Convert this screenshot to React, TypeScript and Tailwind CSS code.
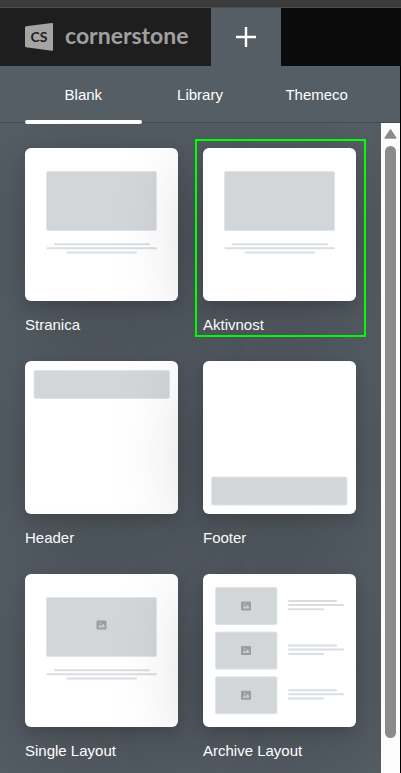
import { useState } from "react";
import type { ReactNode } from "react";

const tabs = ["Blank", "Library", "Themeco"];

function PictureIcon({ x, y }: { x: number; y: number }) {
  return (
    <g transform={`translate(${x} ${y})`}>
      <rect width="10" height="9" rx="1.2" fill="#989ea2" />
      <path d="M2 7V5.6L3.5 4.3L4.6 5.4L6.6 3.2L8.2 5.2V7Z" fill="#c6cacd" />
      <circle cx="3.8" cy="2.6" r="0.8" fill="#c6cacd" />
    </g>
  );
}

function Block({ x, y, width, height }: { x: number; y: number; width: number; height: number }) {
  return (
    <rect x={x} y={y} width={width} height={height} rx="1.5" fill="#d2d6d9" stroke="#dfe5ea" />
  );
}

function Line({ x, y, width }: { x: number; y: number; width: number }) {
  return <rect x={x} y={y} width={width} height="2" rx="1" fill="#d9dee3" />;
}

function PageArt() {
  return (
    <>
      <Block x={21.5} y={23.5} width={110} height={59} />
      <Line x={29} y={95.3} width={96} />
      <Line x={21.5} y={99.3} width={110.5} />
      <Line x={41.5} y={103.4} width={70.5} />
    </>
  );
}

function ArchiveArt() {
  return (
    <>
      {[0, 44.6, 89.3].map((top) => (
        <g key={top}>
          <Block x={12.5} y={top + 13.5} width={61.5} height={37} />
          <PictureIcon x={38} y={top + 27.5} />
          <Line x={85} y={top + 26} width={49} />
          <Line x={85} y={top + 30} width={56} />
          <Line x={85} y={top + 34.3} width={36} />
        </g>
      ))}
    </>
  );
}

const templates: { name: string; art: ReactNode; highlighted?: boolean }[] = [
  { name: "Stranica", art: <PageArt /> },
  { name: "Aktivnost", art: <PageArt />, highlighted: true },
  { name: "Header", art: <Block x={9} y={9.5} width={135.5} height={28} /> },
  { name: "Footer", art: <Block x={8.5} y={116} width={135.5} height={28} /> },
  {
    name: "Single Layout",
    art: (
      <>
        <PageArt />
        <PictureIcon x={71.5} y={46.5} />
      </>
    ),
  },
  { name: "Archive Layout", art: <ArchiveArt /> },
];

function Logo() {
  return (
    <div className="flex min-w-0 flex-1 items-center gap-3 bg-[#1e1e1e] pl-[25px]">
      <svg viewBox="0 0 28 28" className="size-7 shrink-0" aria-hidden="true">
        <path
          d="M1.2 3.3L26.7 0.1Q28 0 28 1.3V26.5Q28 27.9 26.7 27.7L1.1 24.3Q0 24.1 0 23V4.5Q0 3.5 1.2 3.3Z"
          fill="#a5a5a5"
        />
        <text x="14" y="18.8" textAnchor="middle" fontFamily="Lato, sans-serif" fontSize="14" fontWeight="700" fill="#1e1e1e">
          CS
        </text>
      </svg>
      <span className="pb-1 font-[Lato,sans-serif] text-[23px] font-bold leading-7 text-[#a0a0a0]">cornerstone</span>
    </div>
  );
}

export default function App() {
  const [activeTab, setActiveTab] = useState("Blank");

  return (
    <div className="flex min-h-screen flex-col border-r border-black bg-[#555d65] font-['Liberation_Sans',Arial,sans-serif] text-[15px] text-white">
      <div className="-mr-px h-2 border-b border-[#4a4a4a] bg-[#3c3c3c]" />
      <header className="-mr-px flex h-[58px] bg-[#0b0b0b]">
        <Logo />
        <button type="button" aria-label="New document" className="flex w-[70px] shrink-0 items-center justify-center bg-[#555d65]">
          <svg viewBox="0 0 20 20" className="size-5" aria-hidden="true">
            <path d="M10 0V20M0 10H20" stroke="#fff" strokeWidth="2.4" />
          </svg>
        </button>
        <div className="w-[120px] shrink-0" />
      </header>

      <nav className="grid h-[57px] grid-cols-3 border-b border-[#434a51] px-[25px]">
        {tabs.map((tab) => (
          <button key={tab} type="button" onClick={() => setActiveTab(tab)} className="relative pt-0.5">
            {tab}
            {activeTab === tab && <span className="absolute inset-x-0 -bottom-0.5 h-1 rounded-xs bg-white" />}
          </button>
        ))}
      </nav>

      <div className="flex flex-1">
        <main className="grid flex-1 grid-cols-2 content-start gap-x-[25px] gap-y-6 overflow-hidden px-[25px] pt-[25px] pb-2">
          {templates.map(({ name, art, highlighted }) => (
            <button key={name} type="button" className="relative flex flex-col text-left">
              <span className="block w-full rounded-md bg-white shadow-[0_6px_14px_rgba(0,0,0,0.14),0_18px_88px_rgba(0,0,0,0.22)]">
                <svg viewBox="0 0 153 153" className="block w-full" aria-hidden="true">
                  {art}
                </svg>
              </span>
              <span className="relative mt-3 leading-6">{name}</span>
              {highlighted && (
                <span className="absolute -top-[9px] -right-2.5 bottom-0 -left-2 border-2 border-[#00ff00]" />
              )}
            </button>
          ))}
        </main>
        <div className="flex w-[19px] shrink-0 flex-col items-center bg-[#fcfcfc] pt-1.5 pb-[35px]" aria-hidden="true">
          <svg viewBox="0 0 13 10" className="h-2.5 w-[13px] shrink-0">
            <path d="M6.5 1L11.8 9H1.2Z" fill="#8b8b8b" stroke="#8b8b8b" strokeWidth="1.4" strokeLinejoin="round" />
          </svg>
          <div className="mt-[7px] w-[11px] flex-1 rounded-full bg-[#8b8b8b]" />
        </div>
      </div>
    </div>
  );
}
